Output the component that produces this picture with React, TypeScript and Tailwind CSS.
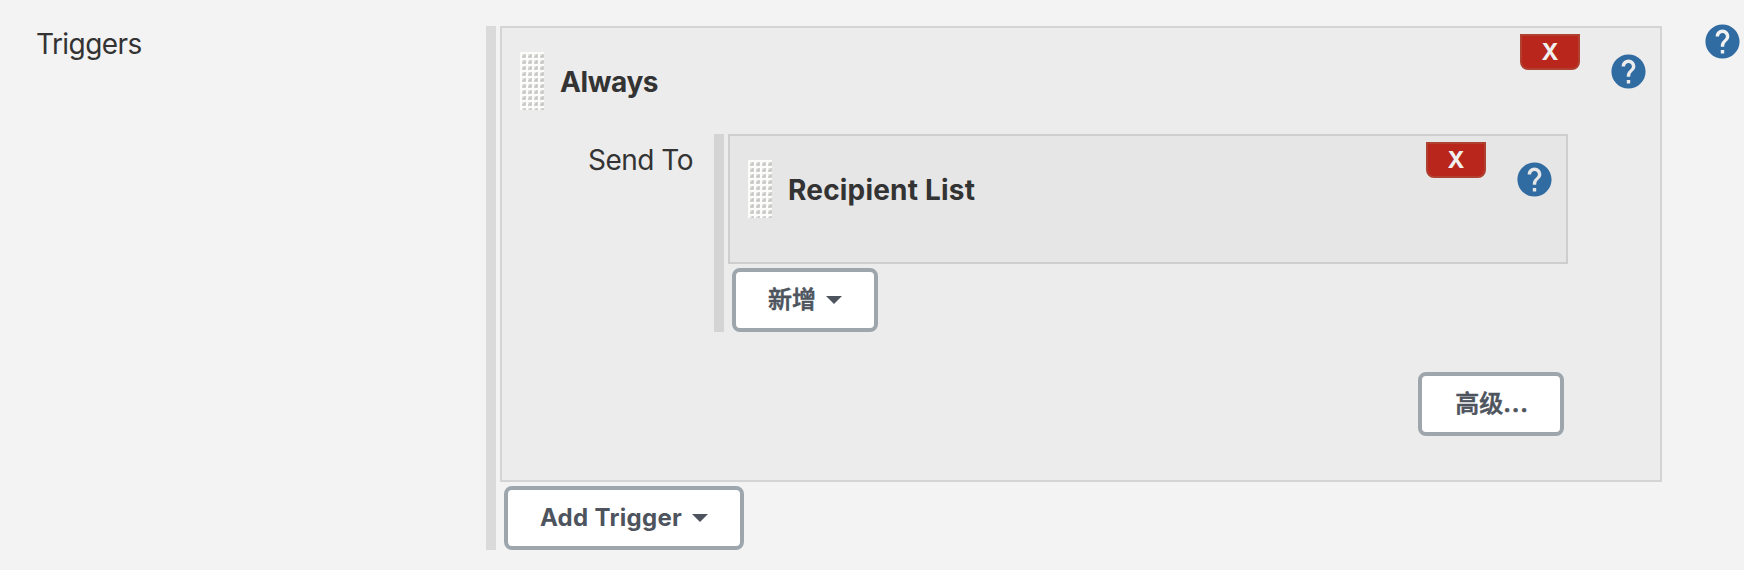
import React from "react";

function Grip() {
  return (
    <svg className="block h-[58px] w-6 shrink-0" viewBox="0 0 24 58">
      <defs>
        <pattern id="grip" width="6" height="6" patternUnits="userSpaceOnUse">
          <rect width="6" height="6" fill="#fcfcfa" />
          <path d="M2 2h4v4H2z" fill="#e9e9e7" />
          <path d="M2 6V4.5L4.5 2H6L5.5 5.5z" fill="#cfcfce" />
          <path d="M3.5 3.5h2v2h-2z" fill="#c4c4c3" />
        </pattern>
      </defs>
      <rect width="24" height="58" fill="url(#grip)" />
    </svg>
  );
}

function Help() {
  return (
    <svg className="block size-[41px] shrink-0" viewBox="0 0 24 24" fill="#306ba1">
      <path d="M12 2C6.48 2 2 6.48 2 12s4.48 10 10 10 10-4.48 10-10S17.52 2 12 2zm1 17h-2v-2h2v2zm2.07-7.75l-.9.92C13.45 12.9 13 13.5 13 15h-2v-.5c0-1.1.45-2.1 1.17-2.83l1.24-1.26c.37-.36.59-.86.59-1.41 0-1.1-.9-2-2-2s-2 .9-2 2H8c0-2.21 1.79-4 4-4s4 1.79 4 4c0 .88-.36 1.68-.93 2.25z" />
    </svg>
  );
}

function RemoveButton() {
  return (
    <button className="flex h-9 w-[60px] shrink-0 items-center justify-center rounded-b-lg border-2 border-[#b04030] bg-[#b9261b] pt-px text-[23px] leading-none font-bold text-[#f0f0f0]">
      X
    </button>
  );
}

function Caret() {
  return (
    <svg className="block h-2 w-4 shrink-0" viewBox="0 0 16 8" fill="#4d545d">
      <path d="M0 0h16L8 8z" />
    </svg>
  );
}

const button =
  "flex h-16 shrink-0 items-center justify-center whitespace-nowrap rounded-lg border-4 border-[#9da6ad] bg-white text-2xl text-[#4d545d]";

export default function App() {
  return (
    <main className="flex h-[570px] w-[1744px] overflow-hidden bg-[#f3f3f3] pt-[26px] font-['Inter','Noto_Sans_CJK_SC',sans-serif] text-[28px] leading-9 text-[#333]">
      <div className="w-[486px] shrink-0 pl-9 tracking-[-0.55px]">Triggers</div>

      <section className="h-[524px] w-[1176px] shrink-0 border-l-10 border-[#dadada] pl-1">
        <div className="h-[456px] border-2 border-[#d4d4d4] bg-[#ececec]">
          <header className="flex h-[106px] items-start pl-[18px]">
            <div className="flex grow items-center pt-6">
              <Grip />
              <h2 className="pt-0.5 pl-4 font-bold tracking-[-0.4px]">Always</h2>
            </div>
            <div className="pt-1.5">
              <RemoveButton />
            </div>
            <div className="pt-[23px] pr-[11px] pl-7">
              <Help />
            </div>
          </header>

          <div className="flex">
            <div className="w-[212px] shrink-0 pt-2 pr-[21px] text-right tracking-[-0.5px]">Send To</div>
            <section className="h-[198px] w-[854px] shrink-0 border-l-10 border-[#d4d4d4] pl-1">
              <div className="flex h-[130px] items-start border-2 border-[#cecece] bg-[#e6e6e6] pl-[18px]">
                <div className="flex grow items-center pt-6">
                  <Grip />
                  <h3 className="pt-0.5 pl-4 font-bold tracking-[0.2px]">Recipient List</h3>
                </div>
                <div className="pt-1.5">
                  <RemoveButton />
                </div>
                <div className="pt-[23px] pr-[11px] pl-7">
                  <Help />
                </div>
              </div>
              <div className="pt-1 pl-1">
                <button className={`${button} w-[146px] gap-2.5 font-medium [-webkit-text-stroke:0.6px]`}>
                  新增
                  <Caret />
                </button>
              </div>
            </section>
          </div>

          <div className="flex justify-end pt-10 pr-24">
            <button className={`${button} w-[146px] pl-0.5 font-medium [-webkit-text-stroke:0.6px]`}>
              高级<span className="font-semibold tracking-[0.8px]">...</span>
            </button>
          </div>
        </div>
        <div className="pt-1 pl-1">
          <button className={`${button} w-60 gap-2.5 font-bold tracking-[0.3px]`}>
            Add Trigger
            <Caret />
          </button>
        </div>
      </section>

      <div className="-mt-[5px] pl-10">
        <Help />
      </div>
    </main>
  );
}
